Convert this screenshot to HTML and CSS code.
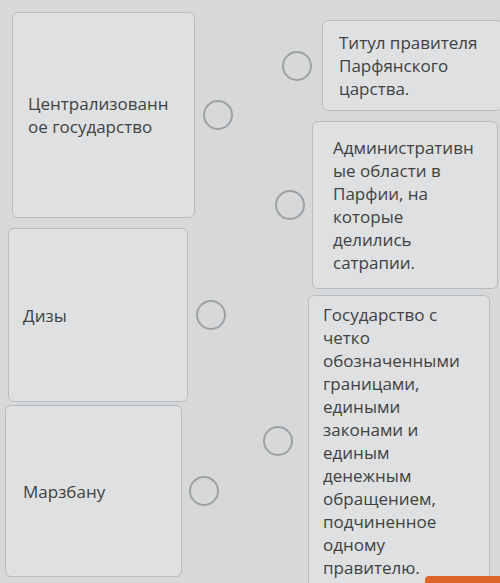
FILE: index.html
```html
<!DOCTYPE html>
<html lang="ru">
<head>
<meta charset="utf-8">
<title>Сопоставление</title>
<link rel="stylesheet" href="styles.css">
</head>
<body>
<div class="board">
  <div class="col col-left">
    <div class="pair pair-l1">
      <div class="card card-l1"><p>Централизованн<wbr>ое государство</p></div>
      <span class="dot"></span>
    </div>
    <div class="pair pair-l2">
      <div class="card card-l2"><p>Дизы</p></div>
      <span class="dot"></span>
    </div>
    <div class="pair pair-l3">
      <div class="card card-l3"><p>Марзбану</p></div>
      <span class="dot"></span>
    </div>
  </div>
  <div class="col col-right">
    <div class="pair pair-r1">
      <span class="dot"></span>
      <div class="card card-r1"><p>Титул правителя Парфянского царства.</p></div>
    </div>
    <div class="pair pair-r2">
      <span class="dot"></span>
      <div class="card card-r2"><p>Административн<wbr>ые области в Парфии, на которые делились сатрапии.</p></div>
    </div>
    <div class="pair pair-r3">
      <span class="dot"></span>
      <div class="card card-r3"><p>Государство с четко обозначенными границами, едиными законами и единым денежным обращением, подчиненное одному правителю.</p></div>
    </div>
  </div>
</div>
<div class="next-btn"></div>
</body>
</html>
```
FILE: styles.css
```css
html, body {
  margin: 0;
  padding: 0;
}
body {
  width: 500px;
  height: 583px;
  overflow: hidden;
  background: #d6d8d9;
  font-family: "Open Sans", "Noto Sans", sans-serif;
  font-size: 17px;
  line-height: 23px;
  color: #404244;
  position: relative;
}
.board {
  display: flex;
  align-items: flex-start;
}
.col {
  display: flex;
  flex-direction: column;
  flex: none;
}
.col-left {
  width: 250px;
  padding-top: 12px;
}
.col-right {
  width: 250px;
  padding-top: 20px;
}
.pair {
  display: flex;
  align-items: center;
}
.card {
  box-sizing: border-box;
  flex: none;
  background: #dee0e1;
  border: 1px solid #b9bcbe;
  border-radius: 6px;
  display: flex;
  align-items: center;
}
.card p {
  margin: 0;
  overflow-wrap: break-word;
}
.dot {
  flex: none;
  box-sizing: border-box;
  width: 30px;
  height: 30px;
  border: 2px solid #9ea1a3;
  border-radius: 50%;
}

/* left column */
.card-l1, .card-l2, .card-l3 {
  padding: 0 15px;
}
.pair-l1 { margin-left: 12px; gap: 8px; }
.card-l1 { width: 183px; height: 206px; }
.pair-l2 { margin-left: 8px; margin-top: 10px; gap: 8px; }
.card-l2 { width: 180px; height: 174px; padding-left: 14px; }
.pair-l3 { margin-left: 5px; margin-top: 3px; gap: 7px; }
.card-l3 { width: 177px; height: 172px; padding-left: 17px; }

/* right column */
.pair-r1 { margin-left: 32px; gap: 10px; }
.card-r1 { width: 180px; padding: 10px 14px 10px 16px; }
.pair-r2 { margin-left: 25px; margin-top: 10px; gap: 7px; }
.card-r2 { width: 186px; height: 168px; padding: 0 14px 0 20px; }
.pair-r3 { margin-left: 13px; margin-top: 6px; gap: 15px; }
.card-r3 { width: 182px; height: 292px; padding: 0 14px; }

.next-btn {
  position: absolute;
  left: 425px;
  top: 576px;
  width: 80px;
  height: 20px;
  background: #e0652a;
  border-radius: 4px;
}
```
